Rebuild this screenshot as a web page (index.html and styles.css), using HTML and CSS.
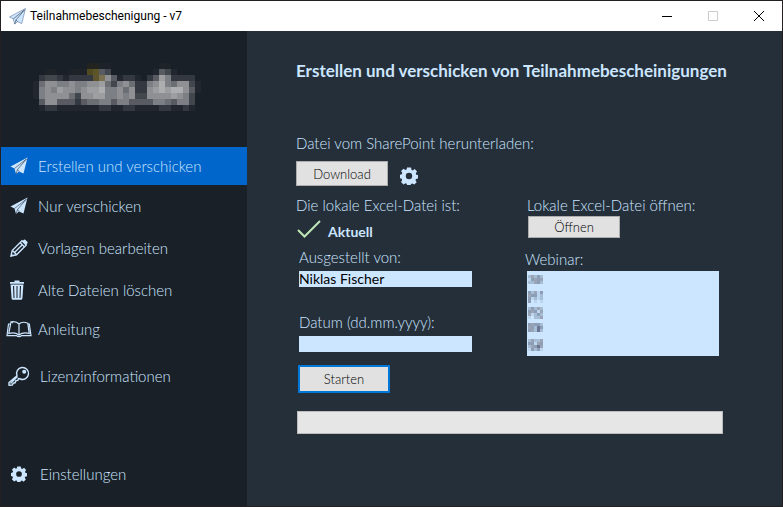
FILE: index.html
```html
<!DOCTYPE html>
<html lang="de">
<head>
<meta charset="utf-8">
<title>Teilnahmebeschenigung - v7</title>
<link rel="stylesheet" href="styles.css">
</head>
<body>
<svg class="defs" width="0" height="0" aria-hidden="true">
  <symbol id="plane" viewBox="0 0 18 18">
    <path class="plane-body" d="M17.500.5.5 9.500 4.500 11.500 6 17 9 14.500 13.500 16.500Z"/>
    <path class="plane-fold" d="M16.500 2 4.500 11.500M16.500 2 7.500 12.500 6 17M7.500 12.500 9 14.500"/>
  </symbol>
  <symbol id="gear" viewBox="0 0 18 18">
    <path fill="currentColor" fill-rule="evenodd" d="M7 .5h4l.5 2.300 1.200.6 2-1.300 2.300 2.500-1.200 2 .4 1.100 1.800.4v3.400l-2 .5-.5 1.200 1.200 2-2.500 2.400-2-1.200-1.200.5-.5 1.600H7.200l-.5-1.800-1.200-.5-2 1.300L1 14.900l1.200-2-.5-1.200L0 11.200V7.800l1.800-.5.5-1.200-1.200-2 2.400-2.300 2 1.200 1.100-.5ZM9 5.800a3.200 3.200 0 1 0 0 6.400 3.200 3.200 0 0 0 0-6.400Z"/>
  </symbol>
</svg>
<div class="window">
  <header class="titlebar">
    <svg class="app-icon" aria-hidden="true"><use href="#plane"/></svg>
    <span class="app-name">Teilnahmebeschenigung - v7</span>
    <div class="window-buttons">
      <button type="button" aria-label="Minimieren"><svg viewBox="0 0 10 10"><path d="M0 5.500h10"/></svg></button>
      <button type="button" aria-label="Maximieren" disabled><svg viewBox="0 0 10 10"><path d="M.5.5h9v9h-9Z"/></svg></button>
      <button type="button" aria-label="Schließen"><svg viewBox="0 0 10 10"><path d="m0 0 10 10M10 0 0 10"/></svg></button>
    </div>
  </header>
  <div class="body">
    <nav class="sidebar">
      <svg class="logo" viewBox="0 0 28 8" role="img" aria-label="Logo" shape-rendering="crispEdges"></svg>
      <a class="nav-item active" href="#" aria-current="page"><svg class="icon plane" viewBox="0 0 18 18"><use href="#plane"/></svg>Erstellen und verschicken</a>
      <a class="nav-item" href="#"><svg class="icon plane" viewBox="0 0 18 18"><use href="#plane"/></svg>Nur verschicken</a>
      <a class="nav-item" href="#"><svg class="icon" viewBox="0 0 18 18"><g fill="none" stroke="currentColor" stroke-width="1.400"><path d="M1 17 2.200 11.500 12 1.800 16.300 6 6.500 15.800Z"/><path d="M2.400 11.600 6.400 15.600M10.300 3.700l4.200 4.200M4.500 13.500l8-8"/></g><path fill="currentColor" d="m12.200 2.600 1.700-1.800q.8-.6 1.600.1l1.800 1.800q.7.9 0 1.700l-1.600 1.700ZM.7 17.400l.7-2.800 2 2Z"/></svg>Vorlagen bearbeiten</a>
      <a class="nav-item" href="#"><svg class="icon trash" viewBox="0 0 18 20"><path fill="currentColor" fill-rule="evenodd" d="M2 2h4.500V.5h5V2H16v1.800H2ZM2.600 4.500h12.800l-1 14q-.2 1.200-1.300 1.200H4.900q-1.200 0-1.300-1.200ZM5 6l.5 12h1L6.100 6ZM8.500 6v12h1V6ZM11.900 6l-.4 12h1L13 6Z"/></svg>Alte Dateien löschen</a>
      <a class="nav-item nav-item-low" href="#"><svg class="icon book" viewBox="0 0 26 18"><path fill="none" stroke="currentColor" stroke-width="1.200" d="M13 14.500V4Q10.500 1 5 1.800L2.800 13.500Q9 11.800 13 15 17 11.800 23.200 13.500L21.800 3.200Q16 1 13 4M4 4 2.500 4 1 15.700h9.500q1 1 2.500 1t2.500-1H25L23.300 4H22M5 1.800 7 3"/></svg>Anleitung</a>
      <a class="nav-item nav-item-tall" href="#"><svg class="icon key" viewBox="0 0 22 20"><path fill="none" stroke="currentColor" stroke-width="1.400" stroke-linejoin="round" d="M9 9.700A6 6 0 1 1 12.300 13L10.500 12.500 9.800 14.400 7.800 14.800 7.200 16.800 5.200 17.200 4.400 19 1 19.200V16.500ZM2.500 17.500l7-7"/><circle cx="16.200" cy="5.800" r="2" fill="currentColor"/></svg>Lizenzinformationen</a>
      <a class="nav-item nav-item-last" href="#"><svg class="icon gear" viewBox="0 0 18 18"><use href="#gear"/></svg>Einstellungen</a>
    </nav>
    <main class="content">
      <h1>Erstellen und verschicken von Teilnahmebescheinigungen</h1>
      <section class="download">
        <p>Datei vom SharePoint herunterladen:</p>
        <div class="row">
          <button class="btn btn-download" type="button">Download</button>
          <button class="icon-btn" type="button" aria-label="Download-Einstellungen"><svg viewBox="0 0 18 18"><use href="#gear"/></svg></button>
        </div>
      </section>
      <div class="columns">
        <form class="left" id="run">
          <p>Die lokale Excel-Datei ist:</p>
          <div class="status"><svg viewBox="0 0 24 18" aria-hidden="true"><path d="m1 10 6.500 6.500L23 1" fill="none" stroke="#c0e6b8" stroke-width="2"/></svg><strong>Aktuell</strong></div>
          <div class="fields">
            <label for="issuer">Ausgestellt von:</label>
            <input id="issuer" type="text" value="Niklas Fischer">
            <label for="date">Datum (dd.mm.yyyy):</label>
            <input id="date" type="text">
          </div>
          <button class="btn btn-start" type="submit">Starten</button>
        </form>
        <section class="right">
          <p>Lokale Excel-Datei öffnen:</p>
          <button class="btn btn-open" type="button">Öffnen</button>
          <p class="list-label" id="webinar-label">Webinar:</p>
          <ul class="listbox" role="listbox" aria-labelledby="webinar-label" tabindex="0"></ul>
        </section>
      </div>
      <div class="progress" role="progressbar" aria-label="Fortschritt" aria-valuenow="0" aria-valuemin="0" aria-valuemax="100"></div>
    </main>
  </div>
</div>
<script src="app.js"></script>
</body>
</html>
```
FILE: styles.css
```css
* { box-sizing: border-box; }
body {
  margin: 0;
  font: 300 15px/20px Lato, "Open Sans", sans-serif;
  color: #cce6ff;
  background: #252f3a;
}
p, h1, ul { margin: 0; padding: 0; }
button, input { font: inherit; }
.defs { position: absolute; }
.window {
  min-height: 100vh;
  display: flex;
  flex-direction: column;
  border: 1px solid #242021;
}
.titlebar {
  display: flex;
  align-items: center;
  height: 30px;
  padding-left: 8px;
  background: #fff;
  color: #000;
  font: 400 12px/16px Roboto, "Noto Sans", sans-serif;
}
.app-icon { width: 17px; height: 17px; margin-right: 4px; }
.plane-body { fill: #cce6ff; }
.plane-fold { fill: none; stroke: #3c4a5c; stroke-width: 0.7; }
.app-icon { stroke: #7084a8; stroke-width: 0.7; }
.window-buttons { display: flex; margin-left: auto; }
.window-buttons button {
  width: 46px;
  height: 30px;
  padding: 0;
  border: 0;
  background: none;
  display: grid;
  place-items: center;
}
.window-buttons svg { width: 10px; height: 10px; fill: none; stroke: #000; overflow: visible; }
.window-buttons button:disabled svg { stroke: #ccc; }
.body { flex: 1; display: flex; }
.sidebar {
  flex: 0 0 246px;
  display: flex;
  flex-direction: column;
  background: #1a2027;
}
.logo { width: 168px; height: 48px; margin: 32px 0 36px 32px; }
.nav-item {
  display: flex;
  align-items: center;
  height: 42px;
  padding-left: 5px;
  gap: 6px;
  color: inherit;
  text-decoration: none;
}
.nav-item.active { height: 38px; background: #0066cc; }
.nav-item-low { height: 36px; }
.nav-item-tall { height: 58px; gap: 8px; }
.nav-item-last { margin: auto 0 11px; gap: 8px; }
.icon { width: 26px; height: 18px; flex: none; }
.icon.trash { height: 20px; padding-right: 4px; }
.icon.key { height: 20px; }
.icon.gear { height: 16px; }
.content { flex: 1; padding: 30px 48px 0 49px; }
h1 { font-size: 17px; line-height: 20px; font-weight: 700; }
.download { margin-top: 52px; }
.row { display: flex; align-items: center; gap: 12px; margin-top: 8px; }
.btn {
  display: block;
  width: 92px;
  height: 25px;
  padding: 0;
  border: 1px solid #adadad;
  background: #e1e1e1;
  color: #000;
  font-size: 13px;
  line-height: 16px;
}
.icon-btn { width: 18px; height: 18px; margin-top: 4px; padding: 0; border: 0; background: none; color: inherit; }
.icon-btn svg { display: block; }
.columns { display: grid; grid-template-columns: 231px 1fr; margin-top: 9px; }
.status { display: flex; align-items: center; height: 28px; gap: 7px; padding-left: 1px; }
.status svg { width: 24px; height: 18px; }
.status strong { padding-top: 6px; font-size: 14px; font-weight: 700; }
.fields { display: flex; flex-direction: column; width: 176px; padding: 4px 0 0 3px; }
.fields input {
  height: 16px;
  margin: 4px 0 25px;
  padding: 0;
  border: 0;
  background: #cce6ff;
  color: #000;
  font-size: 14px;
  font-weight: 400;
}
.fields input:last-child { margin-bottom: 13px; }
.btn-start { height: 28px; margin-left: 2px; border: 2px solid #0078d7; }
.btn-open { height: 22px; margin: 1px 0 0 1px; }
.list-label { margin: 11px 0 2px -2px; }
.listbox {
  max-width: 192px;
  padding: 4px 1px 1px;
  list-style: none;
  background: #cce6ff;
}
.listbox li { height: 16px; }
.listbox svg { display: block; width: 15px; height: 12px; }
.progress { height: 23px; margin: 18px 11px 0 1px; border: 1px solid #bcbcbc; background: #e6e6e6; }
```
FILE: app.js
```js
const NS = "http://www.w3.org/2000/svg";

function paint(svg, rows, colours) {
  rows.forEach((row, y) => [...row].forEach((key, x) => {
    if (!colours[key]) return;
    const cell = document.createElementNS(NS, "rect");
    cell.setAttribute("x", x);
    cell.setAttribute("y", y);
    cell.setAttribute("width", 1);
    cell.setAttribute("height", 1);
    cell.setAttribute("fill", colours[key]);
    svg.append(cell);
  }));
}

paint(document.querySelector(".logo"), [
  "000000000aadd00000000dd00000",
  "00dd00dddoO43000000014310000",
  "0233212222pq7412210248622220",
  "1577667667785367522679657731",
  "1676877678896675722789899741",
  "1677775377886676733777787630",
  "0477444245566466444466546630",
  "0122111111122112211112211210"
], {
  1: "#22272f", 2: "#343941", 3: "#42464d", 4: "#585b61", 5: "#6b6e73",
  6: "#7c7f83", 7: "#8e9093", 8: "#9c9ea0", 9: "#adaeb0",
  a: "#22251f", d: "#1e232a", o: "#504a20", O: "#5d5427", p: "#5d532d", q: "#797050"
});

const list = document.querySelector(".listbox");
[
  ["bdbcb", "acdcd", "bbdcb", "00000"],
  ["cbdac", "dccab", "cabab", "c0a0a"],
  ["bcbdb", "cdcad", "dabcb", "a0bbd"],
  ["cdccb", "dcbec", "cdbeb", "00000"],
  ["bdbbd", "ccadc", "bdced", "acbca"]
].forEach((rows) => {
  const item = document.createElement("li");
  item.setAttribute("role", "option");
  const svg = document.createElementNS(NS, "svg");
  svg.setAttribute("viewBox", "0 0 5 4");
  svg.setAttribute("shape-rendering", "crispEdges");
  paint(svg, rows, { a: "#bdd6ef", b: "#a6bdd6", c: "#8b9eb5", d: "#9aa4b4", e: "#6c7694" });
  item.append(svg);
  list.append(item);
});
```
